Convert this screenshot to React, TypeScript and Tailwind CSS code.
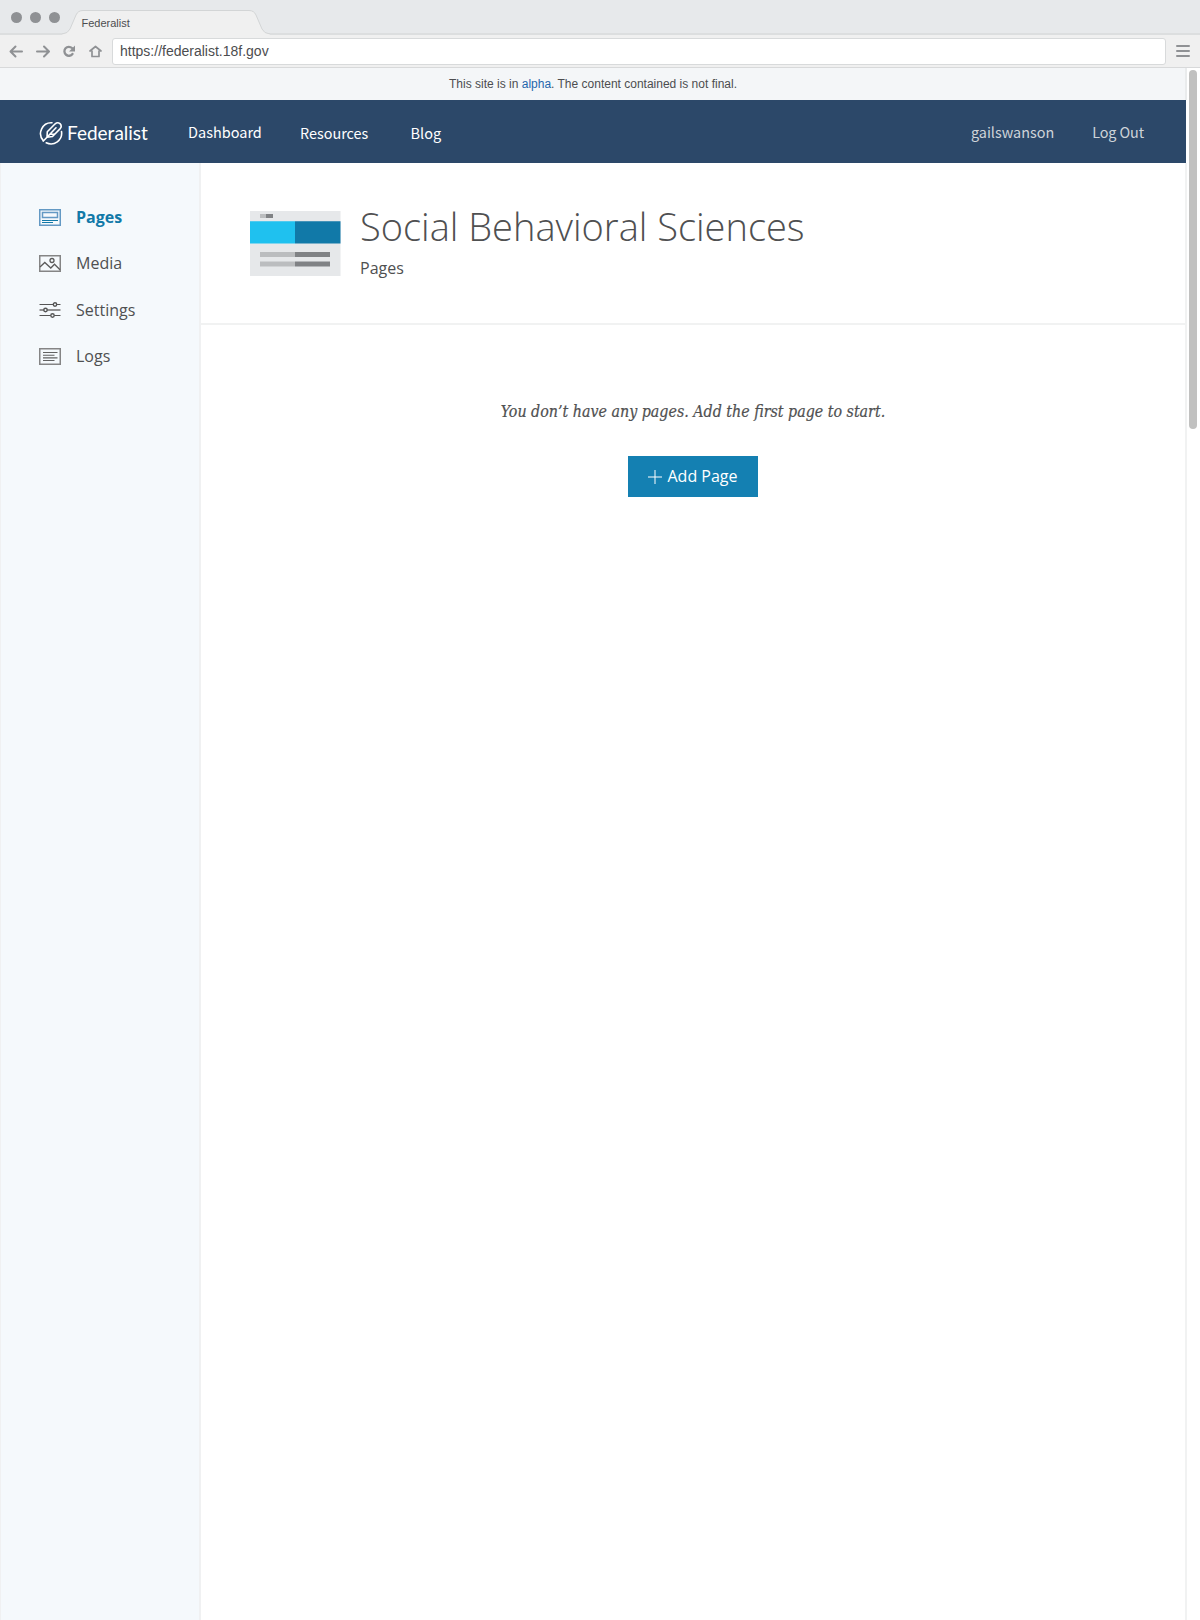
import React from "react";

function BrowserChrome() {
  return (
    <header className="h-[68px] w-full shrink-0 font-['Liberation_Sans',sans-serif] text-[#4c4d4f]">
      <div className="relative flex h-[35px] items-start border-b-2 border-[#dcdedf] bg-[#e7e9eb]">
        <div className="flex gap-2 pt-3 pl-[11px]">
          <i className="size-[11px] rounded-full bg-[#8f9194]" />
          <i className="size-[11px] rounded-full bg-[#8f9194]" />
          <i className="size-[11px] rounded-full bg-[#8f9194]" />
        </div>
        <div className="absolute top-0 left-[62px] h-[35px] w-[208px]">
          <svg className="absolute inset-0" width="208" height="35" viewBox="0 0 208 35">
            <path d="M0 35V34Q6 33.500 8 29L14 15Q16 10.500 21 10.500H187Q192 10.500 194 15L200 29Q202 33.500 208 34V35Z" fill="#f0f0f0" />
            <path d="M0 34Q6 33.500 8 29L14 15Q16 10.500 21 10.500H187Q192 10.500 194 15L200 29Q202 33.500 208 34" fill="none" stroke="#d3d5d6" strokeWidth="1" />
          </svg>
          <span className="relative block pt-[15px] pl-[19.500px] text-[11px] leading-4">Federalist</span>
        </div>
      </div>
      <div className="flex h-[33px] items-center border-b border-[#d8d9da] bg-[#f0f0f0]">
        <svg width="112" height="32" viewBox="0 0 112 32" fill="none" stroke="#8f9194" strokeWidth="2" strokeLinecap="round" strokeLinejoin="round">
          <path d="M11 16.500H22M15.500 11.500L10.500 16.500L15.500 21.500" />
          <path d="M37 16.500H48M44 11.500L49 16.500L44 21.500" />
          <path d="M72.500 19A4.500 4.500 0 1 1 72 13" strokeWidth="2.300" />
          <path d="M75 10.500V16.500H69Z" fill="#8f9194" stroke="none" />
          <path d="M90 16L95.500 11.500L101 16M92 16V21.500H99V16" strokeWidth="1.700" />
        </svg>
        <div className="h-[27px] w-[1054px] rounded-[3px] border-[1.5px] border-[#d8dadb] bg-white pl-[7px] text-[14px] leading-6">
          https://federalist.18f.gov
        </div>
        <svg className="ml-2.5" width="14" height="14" viewBox="0 0 14 14" stroke="#8f9194" strokeWidth="2" strokeLinecap="round">
          <path d="M1 2H13M1 7H13M1 12H13" />
        </svg>
      </div>
    </header>
  );
}

function FederalistLogo() {
  return (
    <svg width="24" height="24" viewBox="0 0 24 24" fill="none" stroke="#fff" strokeWidth="1.6" strokeLinecap="round" strokeLinejoin="round">
      <path d="M13 1.800A10.700 10.700 0 0 0 4.300 19.600M7.200 21.800A10.700 10.700 0 0 0 22.500 10.500" />
      <path d="M4.300 20L8 16.200L8.300 10.800L16.200 2.800Q18.500 .8 21 2.600Q23.300 5 21.200 7.600L13.500 15.500L8 16.200L17 6.800M10.800 13.300H15.300" />
    </svg>
  );
}

function NavBar() {
  return (
    <nav className="flex h-[63px] w-[1186px] shrink-0 bg-[#2c4869] pl-[39px] font-['Noto_Sans_CJK_SC',sans-serif] text-[14.5px] leading-6 text-white">
      <div className="flex w-[149px] gap-[4px] pt-[21px]">
        <FederalistLogo />
        <span className="font-['Lato',sans-serif] text-[19px] leading-[24px]">Federalist</span>
      </div>
      <span className="w-[112px] pt-[20px]">Dashboard</span>
      <span className="w-[110.500px] pt-[21px] text-[14.4px]">Resources</span>
      <span className="pt-[21px]">Blog</span>
      <div className="mr-[42px] ml-auto flex gap-[38px] pt-[20px] text-[14.4px] text-[#cfd4d9]">
        <span>gailswanson</span>
        <span className="tracking-[-0.1px]">Log Out</span>
      </div>
    </nav>
  );
}

function PagesIcon() {
  return (
    <svg width="22" height="17" viewBox="0 0 22 17" fill="none" stroke="#6399c4" strokeWidth="1.5">
      <path d="M.75 .75H21.250V16.250H.75Z" />
      <path d="M3.500 3.500H18.500V8.500H3.500Z" />
      <path d="M3 11.500H19M3 13.500H14" stroke="#1179a8" strokeWidth="1" />
    </svg>
  );
}

function MediaIcon() {
  return (
    <svg width="22" height="17" viewBox="0 0 22 17" fill="none" stroke="#5b5b5b" strokeWidth="1.300">
      <path d="M.75 .75H21.250V16.250H.75Z" stroke="#858585" strokeWidth="1.500" />
      <path d="M1 12L5.800 7.500L11.800 13L15.500 9.200L21 14.800" />
      <circle cx="13" cy="5.500" r="2" />
    </svg>
  );
}

function SettingsIcon() {
  return (
    <svg width="22" height="17" viewBox="0 0 22 17" fill="#f5f9fc" stroke="#555" strokeWidth="1.4">
      <path d="M.5 2.500H21.500M.5 13.500H21.500" strokeWidth="1" />
      <path d="M.5 8H21.500" stroke="#808080" strokeWidth="1.700" />
      <circle cx="16" cy="2.500" r="1.700" />
      <circle cx="6.500" cy="8" r="1.700" />
      <circle cx="13.500" cy="13.500" r="1.700" />
    </svg>
  );
}

function LogsIcon() {
  return (
    <svg width="22" height="17" viewBox="0 0 22 17" fill="none" stroke="#626262" strokeWidth="1.1">
      <path d="M.75 .75H21.250V16.250H.75Z" stroke="#858585" strokeWidth="1.500" />
      <path d="M4 4.500H18.500M4 7.200H15.500M4 9.900H18.500M4 12.500H15.500" />
    </svg>
  );
}

const items = [
  { label: "Pages", Icon: PagesIcon },
  { label: "Media", Icon: MediaIcon },
  { label: "Settings", Icon: SettingsIcon },
  { label: "Logs", Icon: LogsIcon },
];

function Sidebar() {
  return (
    <aside className="w-[201px] shrink-0 border-r-2 border-l border-[#f0f1f2] bg-[#f5f9fc] pt-[31px] pl-[38px]">
      {items.map(({ label, Icon }, i) => (
        <div key={label} className="flex h-[46px] items-center gap-[15px] nth-3:mt-[1px]">
          <Icon />
          <span className={i === 0 ? "text-[16px] font-bold text-[#1179a8]" : "text-[16px]"}>{label}</span>
        </div>
      ))}
    </aside>
  );
}

function SiteThumbnail() {
  return (
    <svg width="91" height="65" viewBox="0 0 91 65">
      <path fill="#e6e8ea" d="M0 0H90.500V65H0Z" />
      <path fill="#bbbdbf" d="M10 3H16V7H10ZM10 41H45V46H10ZM10 50.500H45V55.500H10Z" />
      <path fill="#808285" d="M16 3H23V7H16ZM45 41H80V46H45ZM45 50.500H80V55.500H45Z" />
      <path fill="#1fc1ef" d="M0 10.300H45V32.500H0Z" />
      <path fill="#1179a8" d="M45 10.300H90.500V32.500H45Z" />
    </svg>
  );
}

export default function App() {
  return (
    <div className="flex h-[1620px] w-[1200px] flex-col overflow-hidden bg-white">
      <BrowserChrome />
      <div className="flex min-h-0 flex-1">
        <div className="flex w-[1187px] flex-col">
          <div className="h-8 shrink-0 border-r-2 border-[#e9ebec] bg-[#f4f6f8] pl-px text-center font-['Liberation_Sans',sans-serif] text-[12px] leading-8 text-[#4c4d4f]">
            This site is in <span className="text-[#1f66ad]">alpha</span>. The content contained is not final.
          </div>
          <NavBar />
          <div className="flex min-h-0 flex-1 border-r-2 border-[#f1f2f2] font-['Open_Sans',sans-serif] text-[#4f5051]">
            <Sidebar />
            <main className="flex-1">
              <div className="flex h-[162px] border-b-2 border-[#f1f2f2] pt-[48px] pl-[49px]">
                <SiteThumbnail />
                <div className="pl-[19px]">
                  <h1 className="-mt-[10px] text-[38px] leading-[50px] font-light whitespace-nowrap">Social Behavioral Sciences</h1>
                  <p className="mt-[5px] text-[16px] leading-6">Pages</p>
                </div>
              </div>
              <div className="flex flex-col items-center pt-[75px]">
                <p className="font-['DejaVu_Serif_Condensed','DejaVu_Serif',serif] text-[15.85px] leading-6 whitespace-nowrap italic [-webkit-text-stroke:0.2px_#4f5051] [font-stretch:condensed]">
                  You don’t have any pages. Add the first page to start.
                </p>
                <button className="mt-[32px] flex h-[41px] w-[130px] items-center justify-center gap-[5px] bg-[#1480b2] text-[16px] text-white">
                  <svg width="14" height="14" viewBox="0 0 14 14" stroke="#fff" strokeWidth="1">
                    <path d="M0 7H14M7 0V14" />
                  </svg>
                  <span className="-mt-0.5">Add Page</span>
                </button>
              </div>
            </main>
          </div>
        </div>
        <div className="flex w-[13px] pt-0.5 pl-0.5">
          <div className="h-[359px] w-[7.500px] rounded-full bg-[#c1c1c0]" />
        </div>
      </div>
    </div>
  );
}
